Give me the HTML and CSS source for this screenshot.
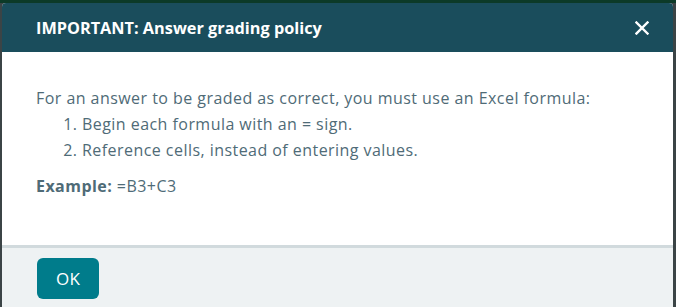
FILE: index.html
```html
<!DOCTYPE html>
<html>
<head>
<meta charset="utf-8">
<link rel="stylesheet" href="styles.css">
</head>
<body>
<div class="backdrop">
  <div class="modal">
    <div class="modal-header">
      <h1 class="modal-title">IMPORTANT: Answer grading policy</h1>
      <button class="close" aria-label="Close">
        <svg width="14" height="14" viewBox="0 0 14 14"><path d="M1.5 1.5 L12.5 12.5 M12.5 1.5 L1.5 12.5" stroke="#fff" stroke-width="2.4" stroke-linecap="square"/></svg>
      </button>
    </div>
    <div class="modal-body">
      <p class="intro">For an answer to be graded as correct, you must use an Excel formula:</p>
      <ol class="steps">
        <li>Begin each formula with an = sign.</li>
        <li>Reference cells, instead of entering values.</li>
      </ol>
      <p class="example"><strong>Example:</strong> =B3+C3</p>
    </div>
    <div class="modal-footer">
      <button class="ok">OK</button>
    </div>
  </div>
</div>
</body>
</html>
```
FILE: styles.css
```css
html, body {
  margin: 0;
  padding: 0;
  width: 676px;
  height: 307px;
  overflow: hidden;
}
body {
  background: #3b4446;
  font-family: "Open Sans", "Liberation Sans", sans-serif;
}
.backdrop {
  height: 307px;
  padding: 3px 3px 0 2px;
  box-sizing: border-box;
  background: linear-gradient(to bottom, #0c3a28 0, #0c3a28 3px, #3b4446 3px);
}
.modal {
  display: flex;
  flex-direction: column;
  height: 304px;
  border-radius: 4px 4px 0 0;
  overflow: hidden;
  background: #fff;
}
.modal-header {
  height: 49px;
  flex: none;
  background: #1a4d5c;
  display: flex;
  align-items: center;
  justify-content: space-between;
  padding: 0 24px 0 34px;
}
.modal-title {
  margin: 0;
  color: #fff;
  font-size: 16.3px;
  font-weight: 700;
  letter-spacing: 0;
}
.close {
  background: none;
  border: 0;
  padding: 0;
  width: 14px;
  height: 14px;
  display: flex;
}
.modal-body {
  flex: 1;
  padding: 33px 34px 0;
  color: #4f6b77;
  font-size: 16px;
  letter-spacing: 0.45px;
}
.intro {
  margin: 0;
  line-height: 26px;
}
.steps {
  margin: 0;
  padding-left: 46px;
  line-height: 26px;
}
.example {
  margin: 12px 0 0;
  line-height: 22px;
}
.example strong {
  font-weight: 700;
}
.modal-footer {
  height: 62px;
  flex: none;
  box-sizing: border-box;
  border-top: 3px solid #d1dadd;
  background: #eef2f3;
  display: flex;
  align-items: flex-start;
  padding: 10px 35px 0;
}
.ok {
  width: 62px;
  height: 41px;
  border: 0;
  border-radius: 6px;
  background: #007c8b;
  color: #fff;
  font-family: inherit;
  font-size: 17px;
  letter-spacing: 0.3px;
}
```
